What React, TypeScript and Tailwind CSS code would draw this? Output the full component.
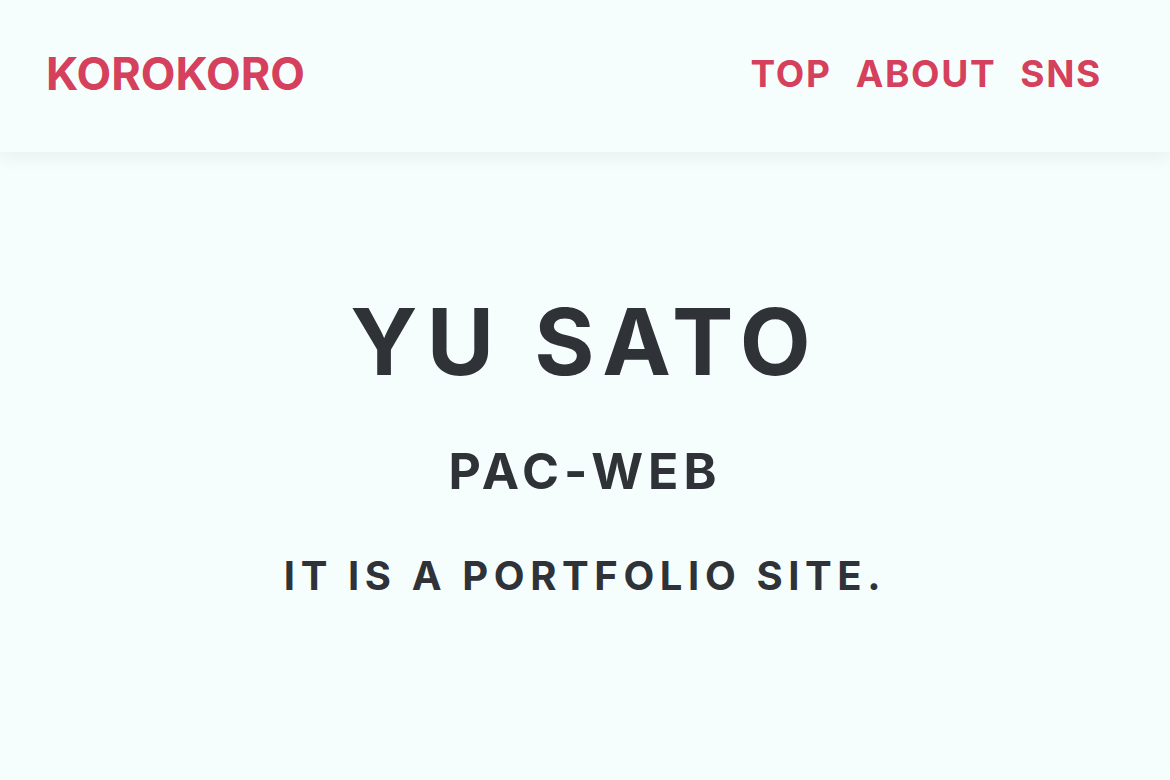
export default function App() {
  return (
    <div className="min-h-[780px] bg-[#f5fefd] font-['Inter','Noto_Sans',sans-serif]">
      <header className="h-[152px] flex items-center justify-between pl-[46px] pr-[68px] pb-[4px] shadow-[0_6px_16px_rgba(0,40,40,0.06)]">
        <h1 className="text-[45px] font-bold text-[#d5405c]">KOROKORO</h1>
        <nav className="flex gap-[24px] text-[37px] font-bold text-[#d5405c] tracking-[0.045em]">
          <a href="#">TOP</a>
          <a href="#">ABOUT</a>
          <a href="#">SNS</a>
        </nav>
      </header>
      <main className="flex flex-col items-center text-[#2f3237] font-bold">
        <h2 className="mt-[144px] text-[92px] leading-none tracking-[0.1em]">YU SATO</h2>
        <p className="mt-[58px] text-[50px] leading-none tracking-[0.1em]">PAC-WEB</p>
        <p className="mt-[60px] text-[40px] leading-none tracking-[0.14em]">IT IS A PORTFOLIO SITE.</p>
      </main>
    </div>
  );
}
